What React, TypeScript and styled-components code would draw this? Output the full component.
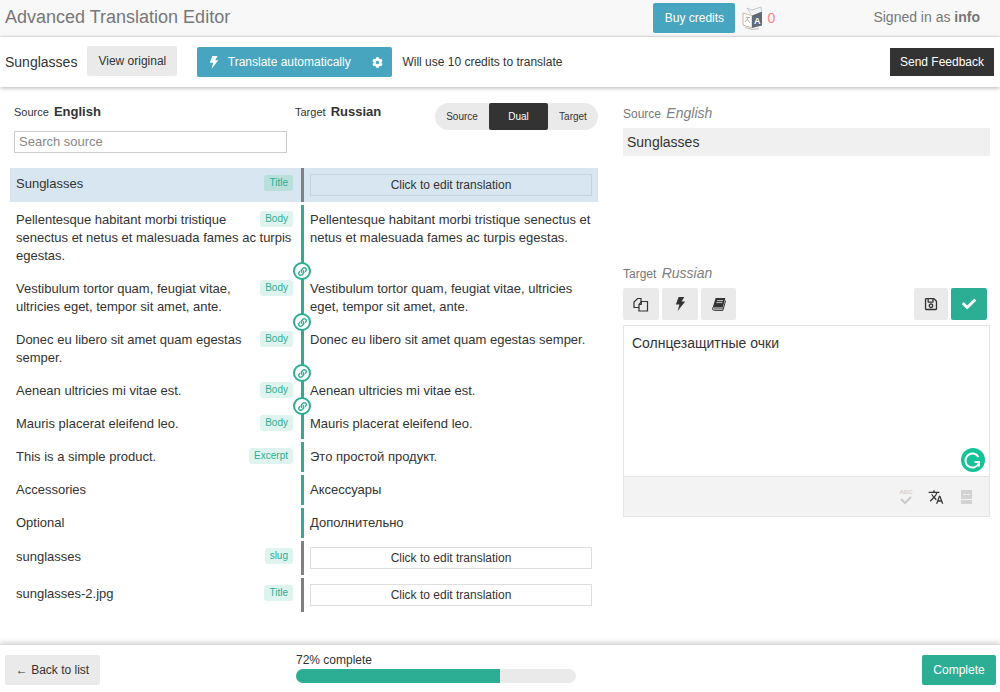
import React from "react";
import styled, { createGlobalStyle } from "styled-components";
import { FaCog, FaRegSave, FaCheck, FaLink } from "react-icons/fa";
import { MdTranslate } from "react-icons/md";

const Global = createGlobalStyle`
  html, body { margin: 0; padding: 0; background: #fff; }
  body { font-family: "Liberation Sans", Arial, sans-serif; font-size: 14px; color: #333; }
  * { box-sizing: border-box; }
`;

const Page = styled.div`
  width: 1000px;
  height: 692px;
  display: flex;
  flex-direction: column;
  overflow: hidden;
`;

const TopBar = styled.header`
  height: 37px;
  flex: none;
  display: flex;
  align-items: center;
  background: #f8f8f8;
  border-bottom: 1px solid #e7e7e7;
  padding: 0 20px 1px 5px;
`;

const Brand = styled.div`
  font-size: 18px;
  color: #777;
  flex: 1;
`;

const Button = styled.button<{ $kind?: "blue" | "dark" | "green" | "plain" }>`
  font-family: inherit;
  font-size: 12px;
  height: 30px;
  border: 0;
  border-radius: 2px;
  padding: 0 10px;
  display: inline-flex;
  align-items: center;
  justify-content: center;
  white-space: nowrap;
  color: ${(p) => (p.$kind && p.$kind !== "plain" ? "#fff" : "#333")};
  background: ${(p) =>
    p.$kind === "blue" ? "#47a5bf" : p.$kind === "dark" ? "#333" : p.$kind === "green" ? "#2bae94" : "#eaeaea"};
`;

const BuyButton = styled(Button)`
  width: 82px;
`;

const CreditBox = styled.div`
  display: flex;
  align-items: center;
  margin-left: 9px;
  width: 129px;
  color: #f8808c;
`;

const CreditCount = styled.span`
  margin-left: 3px;
  font-size: 14px;
`;

const Signed = styled.div`
  color: #777;
  font-size: 14px;
  margin-top: -1px;
  b { font-weight: 700; }
`;

const ToolBar = styled.div`
  height: 50px;
  flex: none;
  display: flex;
  align-items: center;
  background: #fff;
  padding: 0 6px 0 5px;
  box-shadow: 0 1px 4px rgba(0, 0, 0, 0.3);
  position: relative;
  z-index: 1;
`;

const ProductName = styled.div`
  font-size: 14px;
  margin-right: 10px;
`;

const ViewOriginal = styled(Button)`
  width: 90px;
  margin-right: 20px;
  margin-top: -2px;
`;

const TranslateButton = styled(Button)`
  width: 195px;
  justify-content: flex-start;
  padding: 0 0 0 12px;
  font-size: 12px;
`;

const TranslateLabel = styled.span`
  margin-left: 9px;
  flex: 1;
  text-align: left;
`;

const GearSlot = styled.span`
  width: 20px;
  display: flex;
  justify-content: flex-start;
  svg { font-size: 11px; }
`;

const Hint = styled.div`
  font-size: 12px;
  margin-left: 10px;
  flex: 1;
`;

const Feedback = styled(Button)`
  width: 104px;
  height: 28px;
  padding: 0;
  border-radius: 0;
  font-size: 12px;
`;

const Main = styled.main`
  flex: 1;
  display: flex;
  padding: 16px 10px 0 10px;
  gap: 25px;
  min-height: 0;
`;

const LeftPane = styled.section`
  width: 588px;
  flex: none;
`;

const ListHead = styled.div`
  display: flex;
  padding-left: 4px;
  margin-bottom: 15px;
`;

const SourceHead = styled.div`
  width: 273px;
  display: flex;
  flex-direction: column;
`;

const HeadLabel = styled.div`
  height: 18px;
  line-height: 18px;
  font-size: 11px;
  color: #333;
  b { font-size: 13px; font-weight: 700; margin-left: 2px; }
`;

const Search = styled.input`
  margin-top: 10px;
  height: 22px;
  width: 100%;
  border: 1px solid #ccc;
  padding: 0 4px 1px;
  font-family: inherit;
  font-size: 13px;
  outline: 0;
  &::placeholder { color: #888; opacity: 1; }
`;

const TargetHead = styled.div`
  margin-left: 8px;
`;

const Toggle = styled.div`
  margin-left: auto;
  display: flex;
  height: 27px;
  background: #eaeaea;
  border-radius: 14px;
  overflow: hidden;
`;

const ToggleItem = styled.div<{ $w: number; $on?: boolean }>`
  width: ${(p) => p.$w}px;
  display: flex;
  align-items: center;
  justify-content: center;
  font-size: 10px;
  color: ${(p) => (p.$on ? "#fff" : "#333")};
  background: ${(p) => (p.$on ? "#333" : "transparent")};
  border-radius: ${(p) => (p.$on ? "2px" : "0")};
`;

const Rows = styled.div`
  display: flex;
  flex-direction: column;
  gap: 3px;
`;

const Row = styled.div<{ $active?: boolean }>`
  position: relative;
  display: grid;
  grid-template-columns: 291px 3px 1fr;
  background: ${(p) => (p.$active ? "#d7e6f0" : "transparent")};
`;

const LeftCell = styled.div<{ $tall?: boolean }>`
  padding: ${(p) => (p.$tall ? "7px 8px 7px 6px" : "6px 8px 6px 6px")};
  line-height: 18px;
  font-size: 13px;
`;

const Tag = styled.span<{ $active?: boolean }>`
  float: right;
  height: 16px;
  line-height: 15px;
  margin-left: 8px;
  padding: 0 5px;
  font-size: 10px;
  border-radius: 3px;
  color: #2bae94;
  background: ${(p) => (p.$active ? "#b8dfda" : "#e0f4ef")};
`;

const Divider = styled.div<{ $done?: boolean }>`
  background: ${(p) => (p.$done ? "#2bae94" : "#808080")};
`;

const RightCell = styled.div`
  padding: 6px;
  line-height: 18px;
  font-size: 13px;
`;

const EditPrompt = styled.div<{ $active?: boolean }>`
  height: 22px;
  line-height: 20px;
  text-align: center;
  font-size: 12px;
  border: 1px solid ${(p) => (p.$active ? "#c4d4dc" : "#dedede")};
`;

const Chain = styled.span`
  position: absolute;
  left: 283px;
  bottom: -9px;
  width: 18px;
  height: 18px;
  border-radius: 50%;
  background: #fff;
  border: 2px solid #2bae94;
  color: #2bae94;
  display: flex;
  align-items: center;
  justify-content: center;
  z-index: 1;
  svg { font-size: 9px; }
`;

const RightPane = styled.section`
  width: 367px;
  flex: none;
  padding-top: 1px;
`;

const PaneLabel = styled.div`
  height: 18px;
  line-height: 18px;
  font-size: 12px;
  color: #777;
  i { font-size: 14px; margin-left: 2px; color: #808080; }
`;

const SourceBox = styled.div`
  margin-top: 6px;
  height: 28px;
  line-height: 28px;
  padding: 0 4px;
  background: #f0f0f0;
  font-size: 14px;
  margin-bottom: 108px;
`;

const EditorTools = styled.div`
  margin-top: 6px;
  display: flex;
  gap: 3px;
  padding-right: 3px;
  margin-bottom: 5px;
`;

const ToolButton = styled(Button)<{ $w?: number }>`
  width: ${(p) => p.$w ?? 36}px;
  height: 32px;
  padding: 0;
  svg { font-size: 14px; }
`;

const ToolSpacer = styled.div`
  flex: 1;
`;

const Editor = styled.div`
  position: relative;
  height: 192px;
  border: 1px solid #e5e5e5;
  display: flex;
  flex-direction: column;
`;

const EditorText = styled.div`
  flex: 1;
  padding: 8px;
  font-size: 14px;
  line-height: 18px;
`;

const EditorFoot = styled.div`
  height: 40px;
  flex: none;
  background: #f3f3f3;
  border-top: 1px solid #e5e5e5;
  display: flex;
  align-items: center;
  justify-content: flex-end;
  gap: 14px;
  padding: 0 15px 0 0;
`;

const FootIcon = styled.span<{ $dim?: boolean }>`
  width: 16px;
  height: 16px;
  display: flex;
  align-items: center;
  justify-content: center;
  color: ${(p) => (p.$dim ? "#c8c8c8" : "#333")};
`;

const Grammarly = styled.span`
  position: absolute;
  right: 4px;
  bottom: 44px;
  width: 24px;
  height: 24px;
  display: block;
`;

const BottomBar = styled.footer`
  height: 48px;
  flex: none;
  display: flex;
  align-items: center;
  background: #fff;
  padding: 0 4px 0 5px;
  border-top: 1px solid #d8d8d8;
  box-shadow: 0 -2px 5px rgba(0, 0, 0, 0.16);
  position: relative;
`;

const BackButton = styled(Button)`
  width: 95px;
  margin-top: 3px;
`;

const Progress = styled.div`
  margin-left: 196px;
  width: 280px;
  margin-top: -3px;
`;

const ProgressText = styled.div`
  font-size: 12px;
  line-height: 14px;
  height: 17px;
  padding-top: 1px;
`;

const Track = styled.div`
  height: 14px;
  background: #eaeaea;
  border-radius: 7px;
  overflow: hidden;
`;

const Fill = styled.div`
  height: 100%;
  background: #2bae94;
`;

const CompleteButton = styled(Button)`
  margin-left: auto;
  width: 74px;
  margin-top: 3px;
`;

const BoltIcon = ({ size = 14 }: { size?: number }) => (
  <svg width={size * 0.72} height={size} viewBox="0 0 10 14" style={{ flex: "none" }}>
    <path d="M3.6 0 H9.2 L6.6 4.6 H10 L2.6 14 L4.4 7.4 H0.8 Z" fill="currentColor" />
  </svg>
);

const FilesIcon = () => (
  <svg width="16" height="15" viewBox="0 0 16 15">
    <path d="M8 5 V1.5 H4.6 L1 5 V10.5 H6" fill="#eaeaea" stroke="#333" strokeWidth="1.2" />
    <path d="M8.5 4.5 H14.5 V14 H6 V7.5 Z" fill="#eaeaea" stroke="#333" strokeWidth="1.2" />
    <path d="M8.5 4.5 V7.5 H6" fill="none" stroke="#333" strokeWidth="1" />
  </svg>
);

const BookIcon = () => (
  <svg width="14" height="14" viewBox="0 0 14 14">
    <path d="M3.6 1 H13.4 L10.8 10.6 H1.6 L0.6 11 Z" fill="#333" />
    <path d="M0.7 10.5 Q0 13.4 2.4 13.4 H10.9 L13.6 3.6" fill="none" stroke="#333" strokeWidth="1" />
    <path d="M2 11.8 H11" stroke="#333" strokeWidth="0.8" />
    <path d="M5 3.6 H11 M4.4 5.6 H10.4" stroke="#eaeaea" strokeWidth="0.8" />
  </svg>
);

const CreditIcon = () => (
  <svg width="22" height="24" viewBox="0 0 22 24" style={{ marginLeft: -2 }}>
    <path d="M9 8 L5 2 L10 4 L19 1 L19.5 5" fill="#eef3f7" stroke="#b4c0ca" strokeWidth="0.8" />
    <path d="M1 7 L10 9.5 V22 L1 19 Z" fill="#fff" stroke="#d4b2a0" strokeWidth="1" />
    <path d="M10 9.5 L20 5.5 V19.5 L10 22 Z" fill="#5e6a76" />
    <path d="M3 16 L7 11 M4 11.5 H8 M5 13 L8 17" stroke="#b9a49a" strokeWidth="0.9" fill="none" />
    <path d="M3.5 21.5 Q10 25 17 22.5" stroke="#b8b8b8" strokeWidth="1" fill="none" />
    <text x="12" y="17.5" fontSize="9" fontWeight="700" fill="#fff" fontFamily="Liberation Sans">A</text>
  </svg>
);

const SpellIcon = () => (
  <svg width="16" height="18" viewBox="0 0 16 18">
    <text x="8" y="6" textAnchor="middle" fontSize="6" fontWeight="700" fill="#d0d0d0" fontFamily="Liberation Sans">ABC</text>
    <path d="M3 11 L7 15 L13 9" stroke="#c8c8c8" strokeWidth="2" fill="none" />
  </svg>
);

const NoteIcon = () => (
  <svg width="11" height="14" viewBox="0 0 11 14">
    <rect x="0" y="0" width="11" height="14" fill="#d2d2d2" />
    <rect x="0" y="9" width="11" height="1" fill="#f3f3f3" />
    <rect x="2" y="4" width="3" height="1" fill="#f3f3f3" />
    <rect x="6" y="4" width="3" height="1" fill="#f3f3f3" />
  </svg>
);

const GrammarlyIcon = () => (
  <svg width="24" height="24" viewBox="0 0 24 24">
    <circle cx="12" cy="12" r="12" fill="#15c39a" />
    <path d="M17.5 9 A7 7 0 1 0 18 15 M13.5 14 H18 V18.5" fill="none" stroke="#fff" strokeWidth="2" />
  </svg>
);

type RowData = {
  source: string;
  target?: string;
  tag?: string;
  linked?: boolean;
  active?: boolean;
};

const rows: RowData[] = [
  { source: "Sunglasses", tag: "Title", active: true },
  {
    source: "Pellentesque habitant morbi tristique senectus et netus et malesuada fames ac turpis egestas.",
    target: "Pellentesque habitant morbi tristique senectus et netus et malesuada fames ac turpis egestas.",
    tag: "Body",
    linked: true,
  },
  {
    source: "Vestibulum tortor quam, feugiat vitae, ultricies eget, tempor sit amet, ante.",
    target: "Vestibulum tortor quam, feugiat vitae, ultricies eget, tempor sit amet, ante.",
    tag: "Body",
    linked: true,
  },
  {
    source: "Donec eu libero sit amet quam egestas semper.",
    target: "Donec eu libero sit amet quam egestas semper.",
    tag: "Body",
    linked: true,
  },
  { source: "Aenean ultricies mi vitae est.", target: "Aenean ultricies mi vitae est.", tag: "Body", linked: true },
  { source: "Mauris placerat eleifend leo.", target: "Mauris placerat eleifend leo.", tag: "Body" },
  { source: "This is a simple product.", target: "Это простой продукт.", tag: "Excerpt" },
  { source: "Accessories", target: "Аксессуары" },
  { source: "Optional", target: "Дополнительно" },
  { source: "sunglasses", tag: "slug" },
  { source: "sunglasses-2.jpg", tag: "Title" },
];

export default function App() {
  return (
    <Page>
      <Global />
      <TopBar>
        <Brand>Advanced Translation Editor</Brand>
        <BuyButton $kind="blue">Buy credits</BuyButton>
        <CreditBox>
          <CreditIcon />
          <CreditCount>0</CreditCount>
        </CreditBox>
        <Signed>
          Signed in as <b>info</b>
        </Signed>
      </TopBar>
      <ToolBar>
        <ProductName>Sunglasses</ProductName>
        <ViewOriginal>View original</ViewOriginal>
        <TranslateButton $kind="blue">
          <BoltIcon size={13} />
          <TranslateLabel>Translate automatically</TranslateLabel>
          <GearSlot>
            <FaCog />
          </GearSlot>
        </TranslateButton>
        <Hint>Will use 10 credits to translate</Hint>
        <Feedback $kind="dark">Send Feedback</Feedback>
      </ToolBar>
      <Main>
        <LeftPane>
          <ListHead>
            <SourceHead>
              <HeadLabel>
                Source <b>English</b>
              </HeadLabel>
              <Search placeholder="Search source" readOnly />
            </SourceHead>
            <TargetHead>
              <HeadLabel>
                Target <b>Russian</b>
              </HeadLabel>
            </TargetHead>
            <Toggle>
              <ToggleItem $w={54}>Source</ToggleItem>
              <ToggleItem $w={59} $on>
                Dual
              </ToggleItem>
              <ToggleItem $w={50}>Target</ToggleItem>
            </Toggle>
          </ListHead>
          <Rows>
            {rows.map((r) => (
              <Row key={r.source} $active={r.active}>
                <LeftCell $tall={!r.target}>
                  {r.tag && <Tag $active={r.active}>{r.tag}</Tag>}
                  {r.source}
                </LeftCell>
                <Divider $done={!!r.target} />
                <RightCell>
                  {r.target ?? <EditPrompt $active={r.active}>Click to edit translation</EditPrompt>}
                </RightCell>
                {r.linked && (
                  <Chain>
                    <FaLink />
                  </Chain>
                )}
              </Row>
            ))}
          </Rows>
        </LeftPane>
        <RightPane>
          <PaneLabel>
            Source <i>English</i>
          </PaneLabel>
          <SourceBox>Sunglasses</SourceBox>
          <PaneLabel>
            Target <i>Russian</i>
          </PaneLabel>
          <EditorTools>
            <ToolButton>
              <FilesIcon />
            </ToolButton>
            <ToolButton>
              <BoltIcon />
            </ToolButton>
            <ToolButton $w={35}>
              <BookIcon />
            </ToolButton>
            <ToolSpacer />
            <ToolButton $w={34}>
              <FaRegSave />
            </ToolButton>
            <ToolButton $kind="green">
              <FaCheck />
            </ToolButton>
          </EditorTools>
          <Editor>
            <EditorText>Солнцезащитные очки</EditorText>
            <Grammarly>
              <GrammarlyIcon />
            </Grammarly>
            <EditorFoot>
              <FootIcon $dim>
                <SpellIcon />
              </FootIcon>
              <FootIcon>
                <MdTranslate size={16} />
              </FootIcon>
              <FootIcon $dim>
                <NoteIcon />
              </FootIcon>
            </EditorFoot>
          </Editor>
        </RightPane>
      </Main>
      <BottomBar>
        <BackButton>← Back to list</BackButton>
        <Progress>
          <ProgressText>72% complete</ProgressText>
          <Track>
            <Fill style={{ width: "72.8%" }} />
          </Track>
        </Progress>
        <CompleteButton $kind="green">Complete</CompleteButton>
      </BottomBar>
    </Page>
  );
}
